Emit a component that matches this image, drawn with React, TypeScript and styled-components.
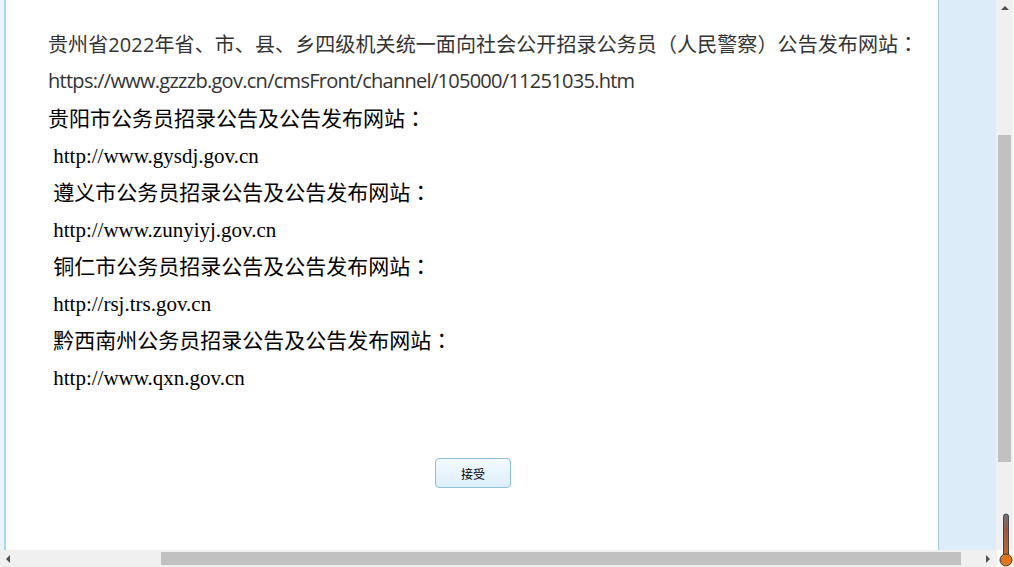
import styled, { createGlobalStyle } from 'styled-components';

const GlobalStyle = createGlobalStyle`
  html, body {
    margin: 0;
    padding: 0;
    width: 1014px;
    height: 567px;
    overflow: hidden;
    background: #ffffff;
  }
`;

const links = [
  { title: '贵阳市公务员招录公告及公告发布网站', url: 'http://www.gysdj.gov.cn', indentTitle: false },
  { title: '遵义市公务员招录公告及公告发布网站', url: 'http://www.zunyiyj.gov.cn', indentTitle: true },
  { title: '铜仁市公务员招录公告及公告发布网站', url: 'http://rsj.trs.gov.cn', indentTitle: true },
  { title: '黔西南州公务员招录公告及公告发布网站', url: 'http://www.qxn.gov.cn', indentTitle: true },
];

const Thermometer = () => (
  <ThermoWrap>
    <svg width="14" height="54" viewBox="0 0 14 54">
      <defs>
        <linearGradient id="tube" x1="0" y1="0" x2="0" y2="1">
          <stop offset="0" stopColor="#6b7480" />
          <stop offset="0.35" stopColor="#a0583a" />
          <stop offset="1" stopColor="#c7672c" />
        </linearGradient>
      </defs>
      <rect x="4.5" y="1" width="5" height="44" rx="2.5" fill="url(#tube)" stroke="#3c4650" strokeWidth="1" />
      <circle cx="7" cy="47" r="6" fill="#e2741c" stroke="#4a3a30" strokeWidth="1" />
    </svg>
  </ThermoWrap>
);

const App = () => {
  return (
    <>
      <GlobalStyle />
      <Window>
        <MainRow>
          <LeftStrip />
          <Content>
            <YaheiLine>
              贵州省2022年省、市、县、乡四级机关统一面向社会公开招录公务员（人民警察）公告发布网站<Colon>：</Colon>
            </YaheiLine>
            <YaheiUrl>https://www.gzzzb.gov.cn/cmsFront/channel/105000/11251035.htm</YaheiUrl>
            <SerifBlock>
              {links.map((l) => (
                <div key={l.url}>
                  <SerifLine>
                    {l.indentTitle ? '\u00a0' : ''}
                    {l.title}
                    <Colon>：</Colon>
                  </SerifLine>
                  <SerifLine>{'\u00a0'}{l.url}</SerifLine>
                </div>
              ))}
            </SerifBlock>
            <ButtonRow>
              <AcceptButton>接受</AcceptButton>
            </ButtonRow>
          </Content>
          <SidePanel />
          <VScroll>
            <ArrowUp />
            <VThumb />
          </VScroll>
        </MainRow>
        <HScroll>
          <ArrowLeft />
          <HTrack>
            <HThumb />
          </HTrack>
          <ArrowRight />
        </HScroll>
        <Thermometer />
      </Window>
    </>
  );
};

export default App;

const Window = styled.div`
  position: relative;
  width: 1014px;
  height: 567px;
  display: flex;
  flex-direction: column;
  overflow: hidden;
`;

const MainRow = styled.div`
  display: flex;
  height: 550px;
`;

const LeftStrip = styled.div`
  width: 4px;
  background: #eaf5fb;
  border-right: 2px solid #a8d8ea;
`;

const Content = styled.div`
  width: 933px;
  box-sizing: border-box;
  padding: 27px 0 0 42px;
  background: #ffffff;
  border-right: 1px solid #a9c9dd;
`;

const Colon = styled.span`
  font-family: "Noto Sans CJK TC", sans-serif;
  line-height: 0;
`;

const YaheiLine = styled.div`
  font-family: "Open Sans", "Noto Sans CJK SC", sans-serif;
  font-size: 20px;
  line-height: 36px;
  color: #333333;
  white-space: nowrap;
  letter-spacing: 0.1px;
`;

const YaheiUrl = styled(YaheiLine)`
  letter-spacing: -0.72px;
`;

const SerifBlock = styled.div`
  margin-top: 2px;
`;

const SerifLine = styled.div`
  font-family: "Liberation Serif", "Noto Sans CJK SC", serif;
  font-size: 21px;
  line-height: 37px;
  color: #000000;
  white-space: nowrap;
`;

const ButtonRow = styled.div`
  display: flex;
  justify-content: center;
  padding-top: 61px;
  padding-right: 42px;
`;

const AcceptButton = styled.button`
  width: 76px;
  height: 30px;
  border: 1px solid #8cc0d8;
  border-radius: 4px;
  background: linear-gradient(#f4faff, #dbeefb);
  font-family: "Noto Sans CJK SC", sans-serif;
  font-size: 12px;
  color: #000000;
  padding: 0;
  margin-left: 2px;
`;

const SidePanel = styled.div`
  width: 57px;
  background: #dcecf9;
`;

const VScroll = styled.div`
  width: 17px;
  background: #f0f0f0;
  display: flex;
  flex-direction: column;
  align-items: center;
`;

const ArrowUp = styled.div`
  margin-top: 6px;
  width: 0;
  height: 0;
  border-left: 4px solid transparent;
  border-right: 4px solid transparent;
  border-bottom: 4px solid #505050;
`;

const VThumb = styled.div`
  margin-top: 125px;
  width: 13px;
  height: 327px;
  background: #c1c1c1;
`;

const HScroll = styled.div`
  height: 17px;
  width: 997px;
  background: #f0f0f0;
  display: flex;
  align-items: center;
`;

const ArrowLeft = styled.div`
  margin-left: 6px;
  width: 0;
  height: 0;
  border-top: 4px solid transparent;
  border-bottom: 4px solid transparent;
  border-right: 4px solid #505050;
`;

const HTrack = styled.div`
  flex: 1;
  display: flex;
  padding-left: 151px;
`;

const HThumb = styled.div`
  width: 800px;
  height: 13px;
  background: #c1c1c1;
`;

const ArrowRight = styled.div`
  margin-right: 7px;
  width: 0;
  height: 0;
  border-top: 4px solid transparent;
  border-bottom: 4px solid transparent;
  border-left: 4px solid #505050;
`;

const ThermoWrap = styled.div`
  position: absolute;
  right: 1px;
  bottom: 0;
  width: 14px;
  height: 54px;
  line-height: 0;
`;
